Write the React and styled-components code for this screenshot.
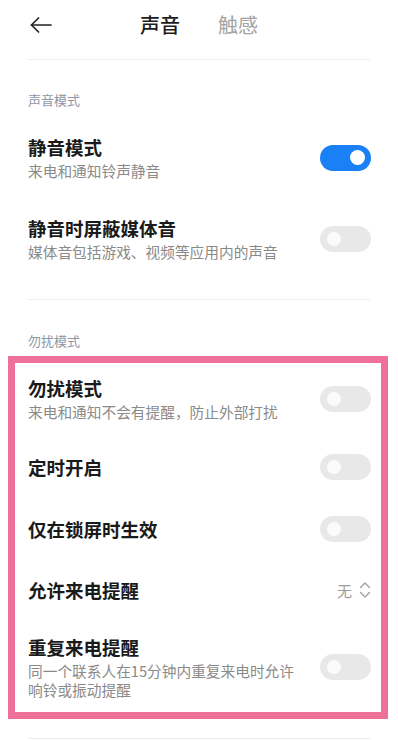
import React from 'react'
import styled, { createGlobalStyle } from 'styled-components'

const GlobalStyle = createGlobalStyle`
  body {
    margin: 0;
    background: #fff;
    font-family: "Noto Sans CJK SC", "Noto Sans", sans-serif;
  }
`

const Page = styled.div`
  width: 398px;
  background: #fff;
`

const Header = styled.header`
  display: flex;
  align-items: center;
  height: 50px;
  margin-bottom: 9px;
  padding-left: 30px;
`

const BackButton = styled.span`
  display: flex;
  width: 22px;
  height: 16px;
`

const Tabs = styled.nav`
  display: flex;
  gap: 38px;
  margin-left: 88px;
`

const Tab = styled.span`
  font-size: 20px;
  line-height: 26px;
  font-weight: ${p => (p.$active ? 500 : 400)};
  color: ${p => (p.$active ? '#1c1c1c' : '#a3a3a3')};
`

const Divider = styled.div`
  height: 1px;
  margin: ${p => p.$margin || '0 28px'};
  background: #ededed;
`

const SectionLabel = styled.div`
  margin: ${p => p.$margin};
  padding: 0 28px;
  font-size: 13px;
  line-height: 18px;
  color: #8e96a6;
`

const Section = styled.section`
  padding: 0 27px 0 28px;
`

const Highlight = styled.section`
  margin: 6px 10px 0 8px;
  padding: 0 10px 0 13px;
  border: 7px solid #ef7199;
`

const Row = styled.div`
  display: flex;
  align-items: center;
  gap: 16px;
  padding: ${p => p.$pad || '18px 0'};
`

const Text = styled.div`
  flex: 1;
  min-width: 0;
`

const Title = styled.div`
  font-size: 18.5px;
  line-height: 24px;
  font-weight: 700;
  color: #1a1a1a;
`

const Subtitle = styled.div`
  margin-top: 2px;
  font-size: 14.7px;
  line-height: 19px;
  color: #8a8a8a;
`

const Toggle = styled.span`
  position: relative;
  flex-shrink: 0;
  width: 51px;
  height: 26px;
  border-radius: 13px;
  background: ${p => (p.$on ? '#1a80f5' : '#e8e8e8')};

  &::after {
    content: '';
    position: absolute;
    top: ${p => (p.$on ? '5.5px' : '6px')};
    left: ${p => (p.$on ? '30px' : '7px')};
    width: ${p => (p.$on ? '15px' : '14px')};
    height: ${p => (p.$on ? '15px' : '14px')};
    border-radius: 50%;
    background: ${p => (p.$on ? '#fff' : '#fbfbfb')};
  }
`

const Value = styled.span`
  display: flex;
  align-items: center;
  gap: 7px;
  flex-shrink: 0;
  font-size: 15px;
  color: #9c9c9c;
`

const ArrowIcon = () => (
  <svg width="22" height="16" viewBox="0 0 22 16" fill="none" stroke="#222" strokeWidth="1.7" strokeLinecap="round" strokeLinejoin="round">
    <path d="M21 8H1.5" />
    <path d="M8.5 1L1.5 8l7 7" />
  </svg>
)

const UpDownIcon = () => (
  <svg width="12" height="18" viewBox="0 0 12 18" fill="none" stroke="#a0a0a0" strokeWidth="1.4" strokeLinecap="round" strokeLinejoin="round">
    <path d="M1.5 6.5L6 2l4.5 4.5" />
    <path d="M1.5 11.5L6 16l4.5-4.5" />
  </svg>
)

const SettingRow = ({ title, sub, on, pad, children }) => (
  <Row $pad={pad}>
    <Text>
      <Title>{title}</Title>
      {sub && <Subtitle>{sub}</Subtitle>}
    </Text>
    {children || <Toggle $on={on} />}
  </Row>
)

export default function App() {
  return (
    <Page>
      <GlobalStyle />
      <Header>
        <BackButton>
          <ArrowIcon />
        </BackButton>
        <Tabs>
          <Tab $active>声音</Tab>
          <Tab>触感</Tab>
        </Tabs>
      </Header>
      <Divider />

      <SectionLabel $margin="31px 0 8px">声音模式</SectionLabel>
      <Section>
        <SettingRow title="静音模式" sub="来电和通知铃声静音" on />
        <SettingRow title="静音时屏蔽媒体音" sub="媒体音包括游戏、视频等应用内的声音" />
      </Section>
      <Divider $margin="20px 28px 0" />

      <SectionLabel $margin="32px 0 0">勿扰模式</SectionLabel>
      <Highlight>
        <SettingRow title="勿扰模式" sub="来电和通知不会有提醒，防止外部打扰" pad="13px 0 15px" />
        <SettingRow title="定时开启" />
        <SettingRow title="仅在锁屏时生效" />
        <SettingRow title="允许来电提醒">
          <Value>
            无
            <UpDownIcon />
          </Value>
        </SettingRow>
        <SettingRow
          title="重复来电提醒"
          sub="同一个联系人在15分钟内重复来电时允许响铃或振动提醒"
          pad="15px 0 13px"
        />
      </Highlight>
      <Divider $margin="19px 28px 0" />
    </Page>
  )
}
